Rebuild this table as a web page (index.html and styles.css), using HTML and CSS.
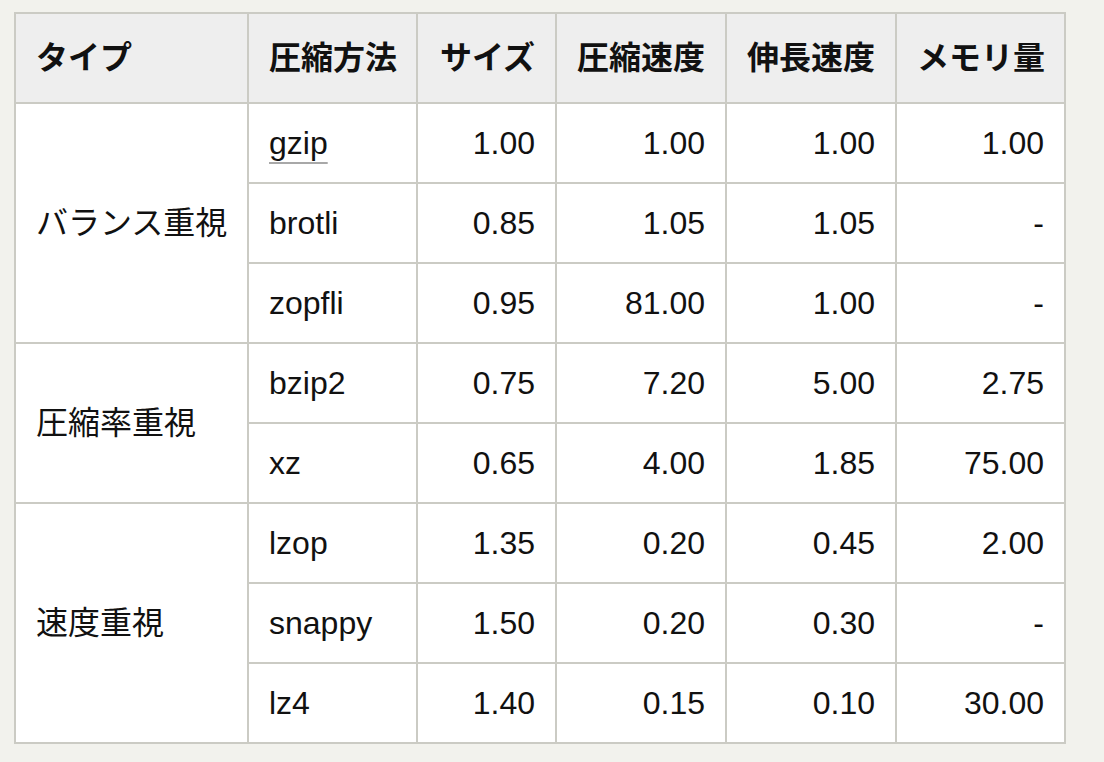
FILE: index.html
```html
<!DOCTYPE html>
<html lang="ja">
<head>
<meta charset="utf-8">
<title>圧縮方法の比較</title>
<link rel="stylesheet" href="styles.css">
</head>
<body>
<table class="cmp">
  <colgroup>
    <col class="c-type">
    <col class="c-method">
    <col class="c-size">
    <col class="c-num">
    <col class="c-num">
    <col class="c-mem">
  </colgroup>
  <thead>
    <tr>
      <th class="left">タイプ</th>
      <th class="left">圧縮方法</th>
      <th class="num">サイズ</th>
      <th class="num">圧縮速度</th>
      <th class="num">伸長速度</th>
      <th class="num">メモリ量</th>
    </tr>
  </thead>
  <tbody>
    <tr>
      <td class="group" rowspan="3">バランス重視</td>
      <td><a class="link" href="#gzip">gzip</a></td>
      <td class="num">1.00</td><td class="num">1.00</td><td class="num">1.00</td><td class="num">1.00</td>
    </tr>
    <tr>
      <td>brotli</td>
      <td class="num">0.85</td><td class="num">1.05</td><td class="num">1.05</td><td class="num">-</td>
    </tr>
    <tr>
      <td>zopfli</td>
      <td class="num">0.95</td><td class="num">81.00</td><td class="num">1.00</td><td class="num">-</td>
    </tr>
    <tr>
      <td class="group" rowspan="2">圧縮率重視</td>
      <td>bzip2</td>
      <td class="num">0.75</td><td class="num">7.20</td><td class="num">5.00</td><td class="num">2.75</td>
    </tr>
    <tr>
      <td>xz</td>
      <td class="num">0.65</td><td class="num">4.00</td><td class="num">1.85</td><td class="num">75.00</td>
    </tr>
    <tr>
      <td class="group" rowspan="3">速度重視</td>
      <td>lzop</td>
      <td class="num">1.35</td><td class="num">0.20</td><td class="num">0.45</td><td class="num">2.00</td>
    </tr>
    <tr>
      <td>snappy</td>
      <td class="num">1.50</td><td class="num">0.20</td><td class="num">0.30</td><td class="num">-</td>
    </tr>
    <tr>
      <td>lz4</td>
      <td class="num">1.40</td><td class="num">0.15</td><td class="num">0.10</td><td class="num">30.00</td>
    </tr>
  </tbody>
</table>
</body>
</html>
```
FILE: styles.css
```css
html, body {
  margin: 0;
  padding: 0;
  background: #f2f2ed;
}

body {
  padding: 12px 0 0 14px;
  font-family: "Liberation Sans", Arial, "Noto Sans CJK JP", sans-serif;
  font-size: 32px;
  color: #111;
}

.cmp {
  table-layout: fixed;
  width: 1052px;
  border-collapse: separate;
  border-spacing: 0;
  border-top: 2px solid #cbcbc4;
  border-left: 2px solid #cbcbc4;
  background: #fff;
}

.c-type { width: 233px; }
.c-method { width: 169px; }
.c-size { width: 139px; }
.c-num { width: 170px; }
.c-mem { width: 169px; }

.cmp th,
.cmp td {
  box-sizing: border-box;
  padding: 0 20px;
  border-right: 2px solid #cbcbc4;
  border-bottom: 2px solid #cbcbc4;
  vertical-align: middle;
  white-space: nowrap;
  line-height: 38px;
}

.cmp th {
  height: 90px;
  background: #eeeeee;
  font-weight: bold;
}

.cmp th.left { text-align: left; }
.cmp th.num { text-align: right; }

.cmp td {
  height: 80px;
  text-align: left;
}

.cmp td.num { text-align: right; }

.cmp td.group { font-weight: normal; }

.link {
  color: #111;
  text-decoration: underline;
  text-decoration-color: #a8a8a8;
  text-decoration-thickness: 2px;
  text-decoration-skip-ink: none;
  text-underline-offset: 8px;
}
```
